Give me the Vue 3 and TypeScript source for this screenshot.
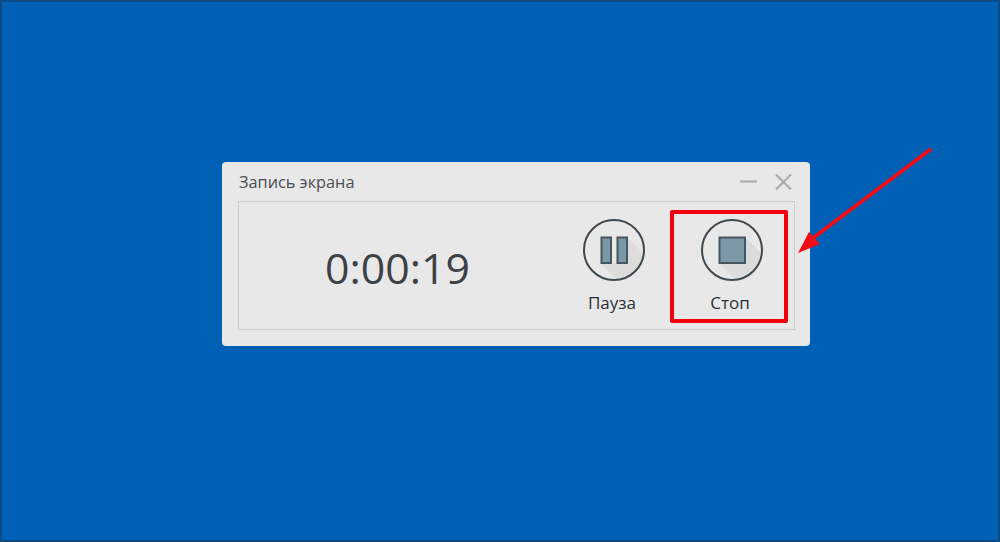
<script setup lang="ts">
const title = 'Запись экрана'
const time = '0:00:19'
</script>

<template>
  <div class="desktop">
    <section class="window">
      <header class="titlebar">
        <span class="title">{{ title }}</span>
        <div class="controls">
          <svg class="ctl" width="17" height="16" viewBox="0 0 17 16"><path d="M0 7.5H17" /></svg>
          <svg class="ctl" width="17" height="16" viewBox="0 0 17 16"><path d="M1 .5L16 15.5M16 .5L1 15.5" /></svg>
        </div>
      </header>
      <div class="panel">
        <div class="time">{{ time }}</div>
        <button class="action">
          <svg class="icon" width="64" height="64" viewBox="0 0 64 64">
            <defs><clipPath id="c1"><circle cx="32" cy="32" r="30" /></clipPath></defs>
            <polygon points="18,45 45,45 45,19 70,44 70,70 43,70" class="shade" clip-path="url(#c1)" />
            <circle cx="32" cy="32" r="30" class="ring" />
            <rect x="19.5" y="19.5" width="9.5" height="25.5" class="glyph" />
            <rect x="35.5" y="19.5" width="9.5" height="25.5" class="glyph" />
          </svg>
          <span class="label">Пауза</span>
        </button>
        <button class="action stop">
          <svg class="icon" width="64" height="64" viewBox="0 0 64 64">
            <defs><clipPath id="c2"><circle cx="32" cy="32" r="30" /></clipPath></defs>
            <polygon points="19,45 45,45 45,19 70,44 70,70 44,70" class="shade" clip-path="url(#c2)" />
            <circle cx="32" cy="32" r="30" class="ring" />
            <rect x="19.5" y="19.5" width="25.5" height="25.5" class="glyph" />
          </svg>
          <span class="label">Стоп</span>
        </button>
      </div>
    </section>
    <svg class="arrow" width="150" height="120" viewBox="0 0 150 120">
      <path d="M138 5L20 94" class="shaft" />
      <polygon points="5,109 16,88 27,100" class="head" />
    </svg>
  </div>
</template>

<style scoped>
.desktop {
  position: relative;
  width: 1000px;
  height: 542px;
  box-sizing: border-box;
  overflow: hidden;
  background: #0060b5;
  border: 2px solid #0c4a86;
  font-family: "Open Sans", "Noto Sans", sans-serif;
}
.window {
  position: absolute;
  left: 220px;
  top: 160px;
  width: 588px;
  height: 184px;
  box-sizing: border-box;
  padding: 0 15px 16px 16px;
  display: flex;
  flex-direction: column;
  background: #e8e8e8;
  border-radius: 4px;
}
.titlebar {
  height: 39px;
  flex: none;
  display: flex;
  align-items: center;
  justify-content: space-between;
  padding-right: 3px;
}
.title {
  font-size: 16.3px;
  color: #4a4d52;
  position: relative;
  left: 1px;
}
.controls {
  display: flex;
  gap: 18px;
  align-items: center;
}
.ctl path {
  fill: none;
  stroke: #adadad;
  stroke-width: 2.2;
}
.panel {
  flex: 1;
  display: flex;
  box-sizing: border-box;
  padding: 8px 6px 6.5px 0;
  border: 1.5px solid #cdcdcd;
}
.time {
  flex: 1;
  display: flex;
  align-items: center;
  justify-content: center;
  font-size: 42.8px;
  color: #3c4145;
  padding: 2px 0 0 4px;
}
.action {
  width: 118px;
  flex: none;
  display: flex;
  flex-direction: column;
  align-items: center;
  box-sizing: border-box;
  padding: 3.5px 0 0;
  background: none;
  border: 4px solid transparent;
  border-radius: 2px;
  font-family: inherit;
}
.stop {
  border-color: #f2000f;
}
.icon {
  display: block;
  margin-left: 6px;
}
.label {
  margin: 10.5px 0 0 2px;
  font-size: 17px;
  line-height: 22px;
  color: #2c3034;
}
.shade {
  fill: #dcdcdc;
}
.ring {
  fill: none;
  stroke: #3f494d;
  stroke-width: 2;
}
.glyph {
  fill: #7a98a5;
  stroke: #46565e;
  stroke-width: 2;
}
.arrow {
  position: absolute;
  left: 791px;
  top: 142px;
}
.shaft {
  fill: none;
  stroke: #ef0e17;
  stroke-width: 4;
}
.head {
  fill: #ef0e17;
}
</style>
